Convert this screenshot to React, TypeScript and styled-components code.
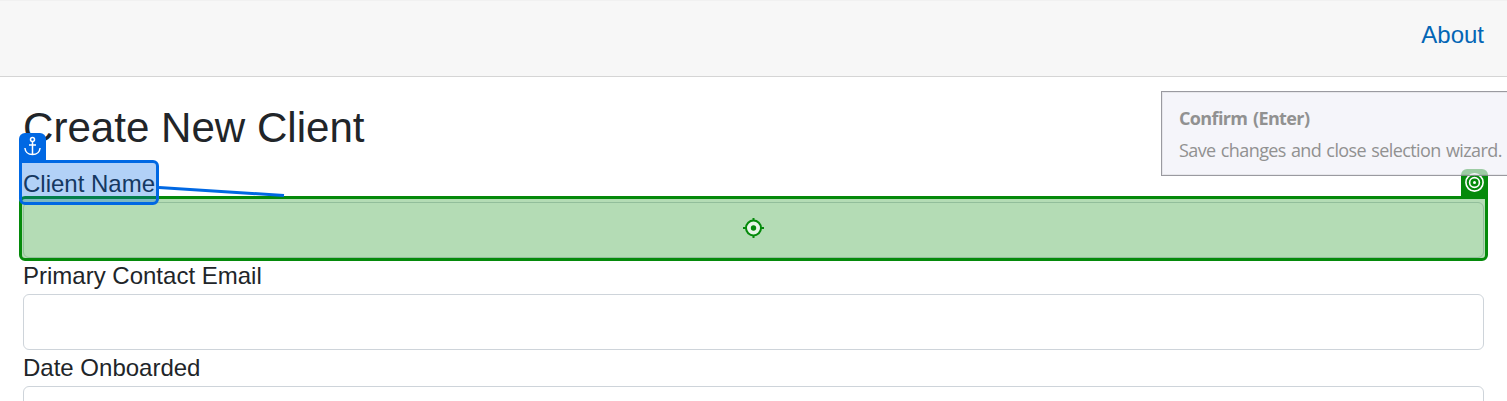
import React from "react";
import styled, { createGlobalStyle } from "styled-components";

const BLUE = "#0068e3";
const GREEN = "#058a0b";

const GlobalStyle = createGlobalStyle`
  *, *::before, *::after { box-sizing: border-box; }
  html, body { margin: 0; height: 100%; overflow: hidden; background: #fff; }
  body { font-family: "Liberation Sans", Arial, sans-serif; font-size: 24px; line-height: 36px; color: #212529; }
`;

const Page = styled.div`
  position: relative;
  height: 401px;
  overflow: hidden;
`;

const Header = styled.header`
  display: flex;
  justify-content: flex-end;
  height: 77px;
  padding: 16px 23px 0;
  background: #f7f7f7;
  border-top: 1px solid #f1f1f1;
  border-bottom: 1px solid #d5d5d5;
`;

const NavLink = styled.a`
  color: #0366b5;
  text-decoration: none;
`;

const Form = styled.form`
  display: flex;
  flex-direction: column;
  padding: 25px 23px 0;
`;

const Title = styled.h1`
  margin: 0 0 13px;
  font-size: 42.1px;
  line-height: 51px;
  font-weight: 400;
`;

const Field = styled.div`
  position: relative;
  display: flex;
  flex-direction: column;
  align-items: flex-start;
`;

const Label = styled.label`
  height: 36px;
`;

const Input = styled.input`
  width: 100%;
  height: 56px;
  padding: 8px 18px;
  border: 1px solid #ced4da;
  border-radius: 6px;
  background: #fff;
  font: inherit;
  outline: none;
`;

const Highlight = styled.div`
  position: absolute;
  display: flex;
  align-items: center;
  justify-content: center;
  border: 3px solid;
  pointer-events: none;
`;

const AnchorHighlight = styled(Highlight)`
  top: -6px;
  left: -4px;
  width: 140px;
  height: 45px;
  border-color: ${BLUE};
  border-radius: 0 6px 6px 6px;
  background: rgba(0, 104, 227, 0.3);
`;

const TargetHighlight = styled(Highlight)`
  inset: 30px -4px -3px;
  padding-bottom: 1px;
  border-color: ${GREEN};
  border-radius: 6px 0 6px 6px;
  background: rgba(5, 138, 11, 0.3);
`;

const Tag = styled.span<{ $color: string; $side: "left" | "right" }>`
  position: absolute;
  bottom: 100%;
  ${(p) => p.$side}: -3px;
  display: flex;
  align-items: center;
  justify-content: center;
  width: 27px;
  height: 30px;
  padding-bottom: 3px;
  border-radius: 6px 6px 0 0;
  background: ${(p) => p.$color};
`;

const Connector = styled.svg`
  position: absolute;
  left: 136px;
  top: 19px;
  overflow: visible;
`;

const Tooltip = styled.aside`
  position: absolute;
  left: 1161px;
  top: 91px;
  width: 360px;
  height: 85px;
  padding: 13px 17px;
  border: 1px solid rgba(105, 105, 112, 0.65);
  box-shadow: inset 0 0 0 1px rgba(105, 105, 112, 0.1);
  background: rgba(240, 240, 248, 0.65);
  color: #919191;
  font-family: "Open Sans", "Noto Sans", sans-serif;
  font-size: 18px;
  white-space: nowrap;
`;

const TooltipTitle = styled.strong`
  display: block;
  margin-bottom: 6px;
  font-weight: 700;
  line-height: 26px;
  letter-spacing: -0.62px;
  word-spacing: 1.5px;
`;

const TooltipText = styled.p`
  margin: 0;
  line-height: 26px;
  letter-spacing: -0.58px;
  word-spacing: 1px;
`;

const AnchorIcon = () => (
  <svg width="19" height="21" viewBox="-.5 -.5 19 21" fill="none" stroke="#fff" strokeWidth="1.5">
    <circle cx="9" cy="3" r="2" />
    <path d="M9 5v13M5.500 8.400h7M1.400 11.500c.5 4 3.300 6.500 7.600 6.500s7.100-2.500 7.600-6.500" />
  </svg>
);

const TargetIcon = () => (
  <svg width="21" height="21" viewBox="0 0 21 21" fill="none" stroke="#fff" strokeWidth="1.6">
    <circle cx="10.500" cy="10.500" r="8.600" />
    <circle cx="10.500" cy="10.500" r="4.900" />
    <circle cx="10.500" cy="10.500" r="1.500" fill="#fff" stroke="none" />
  </svg>
);

const CrosshairIcon = () => (
  <svg width="23" height="22" viewBox="-.5 0 23 22" fill="none" stroke={GREEN} strokeWidth="2">
    <circle cx="11" cy="11" r="7.500" fill="#e8f5e8" />
    <path d="M11 1v3M11 18v3M.5 11h3M18.500 11h3" />
    <circle cx="11" cy="11" r="2.700" fill={GREEN} stroke="none" />
  </svg>
);

export default function App() {
  return (
    <>
      <GlobalStyle />
      <Page>
        <Header>
          <NavLink href="#about">About</NavLink>
        </Header>
        <Form>
          <Title>Create New Client</Title>
          <Field>
            <Label htmlFor="name">Client Name</Label>
            <Input id="name" />
            <TargetHighlight>
              <Tag $color={GREEN} $side="right"><TargetIcon /></Tag>
              <CrosshairIcon />
            </TargetHighlight>
            <AnchorHighlight>
              <Tag $color={BLUE} $side="left"><AnchorIcon /></Tag>
            </AnchorHighlight>
            <Connector width="126" height="12">
              <path d="M0 2.500L125 10.500" stroke={BLUE} strokeWidth="3" />
            </Connector>
          </Field>
          <Field>
            <Label htmlFor="email">Primary Contact Email</Label>
            <Input id="email" />
          </Field>
          <Field>
            <Label htmlFor="date">Date Onboarded</Label>
            <Input id="date" />
          </Field>
        </Form>
        <Tooltip>
          <TooltipTitle>Confirm (Enter)</TooltipTitle>
          <TooltipText>Save changes and close selection wizard.</TooltipText>
        </Tooltip>
      </Page>
    </>
  );
}
